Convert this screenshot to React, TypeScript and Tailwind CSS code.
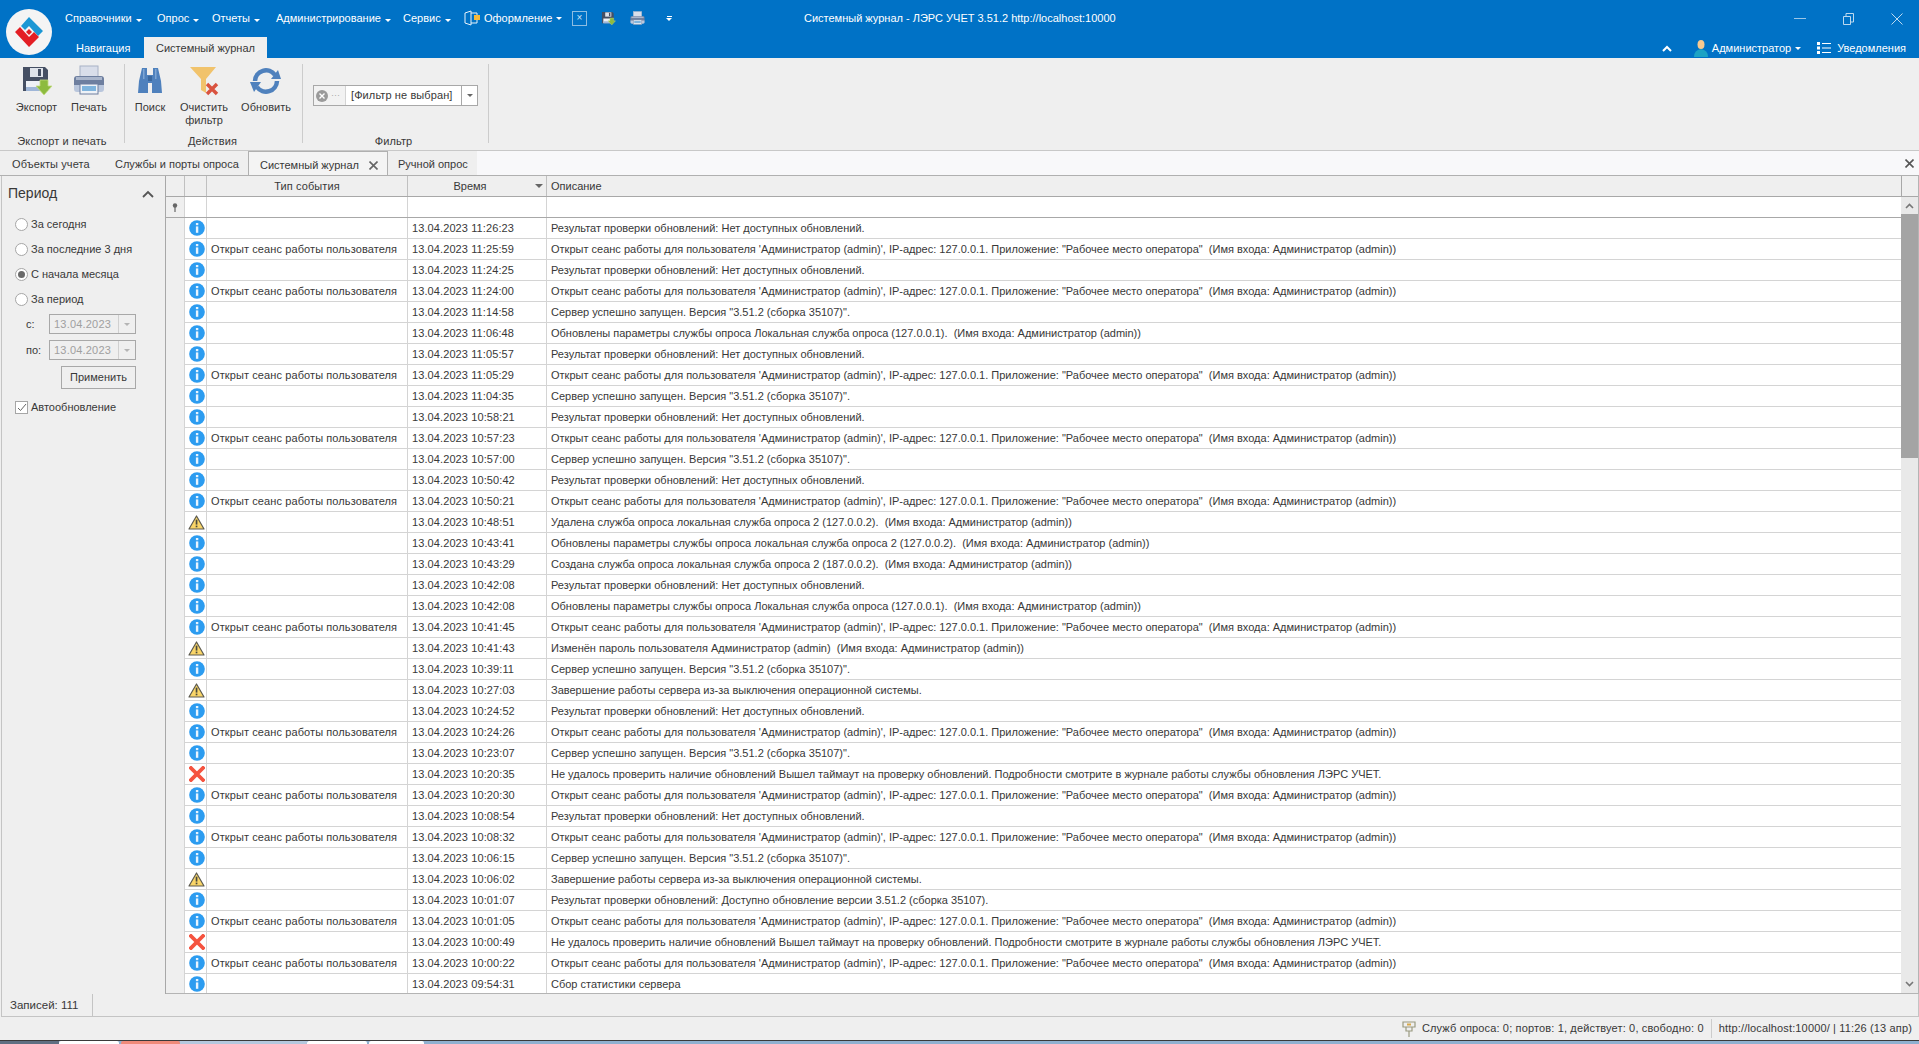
/* Системный журнал - ЛЭРС УЧЕТ */
import React from "react";

type Kind = "info" | "warn" | "error";
type Row = { kind: Kind; type?: boolean; time: string; text: string };

const OPEN = `Открыт сеанс работы для пользователя 'Администратор (admin)', IP-адрес: 127.0.0.1. Приложение: "Рабочее место оператора"  (Имя входа: Администратор (admin))`;
const CHECK = "Результат проверки обновлений: Нет доступных обновлений.";
const STARTED = `Сервер успешно запущен. Версия "3.51.2 (сборка 35107)".`;
const SHUTDOWN = "Завершение работы сервера из-за выключения операционной системы.";
const FAILED = "Не удалось проверить наличие обновлений Вышел таймаут на проверку обновлений. Подробности смотрите в журнале работы службы обновления ЛЭРС УЧЕТ.";
const UPDATED = "Обновлены параметры службы опроса Локальная служба опроса (127.0.0.1).  (Имя входа: Администратор (admin))";

const rows: Row[] = [
  { kind: "info", time: "11:26:23", text: CHECK },
  { kind: "info", type: true, time: "11:25:59", text: OPEN },
  { kind: "info", time: "11:24:25", text: CHECK },
  { kind: "info", type: true, time: "11:24:00", text: OPEN },
  { kind: "info", time: "11:14:58", text: STARTED },
  { kind: "info", time: "11:06:48", text: UPDATED },
  { kind: "info", time: "11:05:57", text: CHECK },
  { kind: "info", type: true, time: "11:05:29", text: OPEN },
  { kind: "info", time: "11:04:35", text: STARTED },
  { kind: "info", time: "10:58:21", text: CHECK },
  { kind: "info", type: true, time: "10:57:23", text: OPEN },
  { kind: "info", time: "10:57:00", text: STARTED },
  { kind: "info", time: "10:50:42", text: CHECK },
  { kind: "info", type: true, time: "10:50:21", text: OPEN },
  { kind: "warn", time: "10:48:51", text: "Удалена служба опроса локальная служба опроса 2 (127.0.0.2).  (Имя входа: Администратор (admin))" },
  { kind: "info", time: "10:43:41", text: "Обновлены параметры службы опроса локальная служба опроса 2 (127.0.0.2).  (Имя входа: Администратор (admin))" },
  { kind: "info", time: "10:43:29", text: "Создана служба опроса локальная служба опроса 2 (187.0.0.2).  (Имя входа: Администратор (admin))" },
  { kind: "info", time: "10:42:08", text: CHECK },
  { kind: "info", time: "10:42:08", text: UPDATED },
  { kind: "info", type: true, time: "10:41:45", text: OPEN },
  { kind: "warn", time: "10:41:43", text: "Изменён пароль пользователя Администратор (admin)  (Имя входа: Администратор (admin))" },
  { kind: "info", time: "10:39:11", text: STARTED },
  { kind: "warn", time: "10:27:03", text: SHUTDOWN },
  { kind: "info", time: "10:24:52", text: CHECK },
  { kind: "info", type: true, time: "10:24:26", text: OPEN },
  { kind: "info", time: "10:23:07", text: STARTED },
  { kind: "error", time: "10:20:35", text: FAILED },
  { kind: "info", type: true, time: "10:20:30", text: OPEN },
  { kind: "info", time: "10:08:54", text: CHECK },
  { kind: "info", type: true, time: "10:08:32", text: OPEN },
  { kind: "info", time: "10:06:15", text: STARTED },
  { kind: "warn", time: "10:06:02", text: SHUTDOWN },
  { kind: "info", time: "10:01:07", text: "Результат проверки обновлений: Доступно обновление версии 3.51.2 (сборка 35107)." },
  { kind: "info", type: true, time: "10:01:05", text: OPEN },
  { kind: "error", time: "10:00:49", text: FAILED },
  { kind: "info", type: true, time: "10:00:22", text: OPEN },
  { kind: "info", time: "09:54:31", text: "Сбор статистики сервера" },
];

function Caret({ className = "border-t-white" }: { className?: string }) {
  return <span className={`ml-[4px] inline-block h-0 w-0 border-x-[3px] border-t-[3px] border-x-transparent ${className}`} />;
}

function StatusIcon({ kind }: { kind: Kind }) {
  if (kind === "warn")
    return (
      <svg width="17" height="15" viewBox="0 0 17 15">
        <path d="M8.5 1 L16 14 H1 Z" fill="#f9d568" stroke="#5c5a50" strokeWidth="1.2" strokeLinejoin="round" />
        <rect x="7.7" y="4.6" width="1.7" height="5" fill="#4a4a3c" />
        <rect x="7.7" y="10.6" width="1.7" height="1.7" fill="#4a4a3c" />
      </svg>
    );
  if (kind === "error")
    return (
      <svg width="16" height="16" viewBox="0 0 16 16">
        <path d="M2 2 L14 14 M14 2 L2 14" stroke="#f5533f" strokeWidth="3.8" strokeLinecap="square" />
      </svg>
    );
  return (
    <svg width="16" height="16" viewBox="0 0 16 16">
      <circle cx="8" cy="8" r="7.8" fill="#2c9cf0" />
      <rect x="6.9" y="3" width="2.4" height="2.2" fill="#e8f4ff" />
      <rect x="6.9" y="6.4" width="2.4" height="6.4" fill="#e8f4ff" />
    </svg>
  );
}

function Logo() {
  return (
    <svg width="46" height="46" viewBox="0 0 46 46">
      <circle cx="23" cy="23" r="23" fill="#f4f4f4" />
      <path d="M15 17 L23 8 L37 22 L32 27 L23 17 L19 21 Z" fill="#1b97d4" />
      <path d="M9 23 L14 18 L23 28 L28 23 L33 28 L23 38 Z" fill="#e31e24" />
      <path d="M23 20 L26 23 L23 26 L20 23 Z" fill="#e31e24" />
    </svg>
  );
}

function FloppyIcon({ size = 32 }: { size?: number }) {
  return (
    <svg width={size} height={size} viewBox="0 0 32 32">
      <path d="M2 2 H24 L27 5 V26 H2 Z" fill="#454f63" />
      <rect x="9" y="3" width="13" height="9" fill="#dfe3ea" />
      <rect x="17" y="4" width="3" height="7" fill="#454f63" />
      <rect x="5" y="16" width="19" height="10" fill="#eef1f6" />
      <rect x="5" y="22" width="19" height="4" fill="#9fb6d8" />
      <path d="M19 15 H27 V21 H31 L23 30 L15 21 H19 Z" fill="#8dbb3f" stroke="#c3dc82" strokeWidth="0.8" />
    </svg>
  );
}

function PrinterIcon({ size = 32 }: { size?: number }) {
  return (
    <svg width={size} height={size} viewBox="0 0 32 32">
      <rect x="7" y="1" width="18" height="12" fill="#d9deea" stroke="#a8b2c6" />
      <rect x="1" y="11" width="30" height="13" rx="3" fill="#6e7f9f" />
      <rect x="3" y="12" width="26" height="3" fill="#aab6cc" />
      <path d="M1 20 H31 V24 Q31 27 28 27 H4 Q1 27 1 24 Z" fill="#b9c6dc" />
      <rect x="7" y="19" width="18" height="10" fill="#eef2f7" stroke="#6e7f9f" />
      <rect x="9" y="21" width="14" height="5" fill="#7fb4dd" />
    </svg>
  );
}

function BinocularsIcon() {
  return (
    <svg width="26" height="27" viewBox="0 0 26 27">
      <path d="M5 1 H10 V8 H16 V1 H21 L24 14 L25 26 H15 V16 H11 V26 H1 L2 14 Z" fill="#4f81bd" />
      <rect x="6" y="2" width="1.5" height="10" fill="#7ea6d4" />
      <rect x="18" y="2" width="1.5" height="10" fill="#7ea6d4" />
      <rect x="11" y="9" width="4" height="5" fill="#3a689f" />
    </svg>
  );
}

function ClearFilterIcon() {
  return (
    <svg width="30" height="30" viewBox="0 0 30 30">
      <path d="M1 1 H27 L17 13 V27 L12 24 V13 Z" fill="#f1c36c" />
      <path d="M18 18 L28 28 M28 18 L18 28" stroke="#d9533f" strokeWidth="3.4" />
    </svg>
  );
}

function RefreshIcon() {
  return (
    <svg width="32" height="28" viewBox="0 0 32 28">
      <path d="M5 14 A11 11 0 0 1 25 8" fill="none" stroke="#4f81bd" strokeWidth="4.5" />
      <path d="M27 14 A11 11 0 0 1 7 20" fill="none" stroke="#4f81bd" strokeWidth="4.5" />
      <path d="M21 12 L31 12 L28 3 Z" fill="#4f81bd" />
      <path d="M0 15 L11 15 L4 25 Z" fill="#4f81bd" />
    </svg>
  );
}

function RibbonButton({ label, width, icon }: { label: React.ReactNode; width: string; icon: React.ReactNode }) {
  return (
    <div className={`flex flex-col items-center pt-[2px] text-center leading-[13px] ${width}`}>
      <div className="flex h-[29px] items-center justify-center">{icon}</div>
      <div className="mt-[6px]">{label}</div>
    </div>
  );
}

function RibbonGroup({ label, width, labelClass = "", children }: { label: string; width: string; labelClass?: string; children: React.ReactNode }) {
  return (
    <>
      <div className={`flex h-[85px] flex-col ${width}`}>
        <div className="flex flex-1">{children}</div>
        <div className={`h-[16px] text-center tracking-[0.1px] ${labelClass}`}>{label}</div>
      </div>
      <div className="h-[79px] w-[1px] bg-[#cccccc]" />
    </>
  );
}

function Radio({ label, checked }: { label: string; checked?: boolean }) {
  return (
    <div className="flex h-[25px] items-center pl-[13px]">
      <span className="flex h-[13px] w-[13px] items-center justify-center rounded-full border border-[#a6a6a6] bg-white">
        {checked && <span className="h-[7px] w-[7px] rounded-full bg-[#6a6a6a]" />}
      </span>
      <span className="ml-[3px]">{label}</span>
    </div>
  );
}

function DateField({ label, className }: { label: string; className: string }) {
  return (
    <div className={`flex items-center pl-[24px] ${className}`}>
      <span className="w-[23px]">{label}</span>
      <div className="flex h-[20px] w-[87px] items-center border border-[#a8a8a8] pl-[4px] tracking-[0.2px] text-[#a0a0a0]">
        <span className="flex-1">13.04.2023</span>
        <span className="flex h-full w-[17px] items-center justify-center border-l border-[#d0d0d0]">
          <Caret className="!ml-0 border-t-[#b4b4b4]" />
        </span>
      </div>
    </div>
  );
}

function LogRow({ row }: { row: Row }) {
  return (
    <div className="flex h-[21px] shrink-0">
      <div className="w-[18px] bg-[#efefef]" />
      <div className="flex w-[22px] items-center justify-center border-b border-l border-[#d4d4d4] bg-white pl-[2px]">
        <StatusIcon kind={row.kind} />
      </div>
      <div className="flex w-[201px] items-center border-b border-l border-[#d4d4d4] bg-white pl-[4px] pt-[1px] tracking-[0.1px]">
        {row.type ? "Открыт сеанс работы пользователя" : ""}
      </div>
      <div className="flex w-[139px] items-center border-b border-l border-[#d4d4d4] bg-white pl-[4px] pt-[1px] tracking-[0.1px]">13.04.2023 {row.time}</div>
      <div className="flex flex-1 items-center whitespace-pre border-b border-l border-[#d4d4d4] bg-white pl-[4px] pt-[1px]">{row.text}</div>
    </div>
  );
}

export default function App() {
  return (
    <div className="flex h-[1044px] w-full flex-col overflow-hidden bg-[#efefef] font-['Liberation_Sans',sans-serif] text-[11px] text-[#383838]">
      {/* Title bar */}
      <header className="flex h-[58px] shrink-0 bg-[#0072c6] text-white">
        <div className="w-[58px] pl-[6px] pt-[9px]">
          <Logo />
        </div>
        <div className="flex flex-1 flex-col">
          <div className="flex h-[37px] items-center">
            <div className="flex w-[746px] items-center pl-[7px] pb-[1px]">
              <span className="w-[92px]">Справочники<Caret /></span>
              <span className="w-[55px]">Опрос<Caret /></span>
              <span className="w-[64px]">Отчеты<Caret /></span>
              <span className="w-[127px]">Администрирование<Caret /></span>
              <span className="w-[61px]">Сервис<Caret /></span>
              <span className="flex w-[108px] items-center">
                <svg width="16" height="16" viewBox="0 0 16 16" className="mr-[4px]">
                  <path d="M1 3 L7 1 V15 L1 13 Z M7 3 H13 V13 H7" fill="none" stroke="#e8f2fa" strokeWidth="1" />
                  <rect x="10" y="5" width="6" height="5" fill="#f5b93a" />
                </svg>
                Оформление<Caret />
              </span>
              <span className="flex h-[15px] w-[15px] items-center justify-center border border-[#8dbde2] text-[10px] leading-none text-[#cfe4f5]">×</span>
              <span className="ml-[14px] flex"><FloppyIcon size={15} /></span>
              <span className="ml-[14px] flex"><PrinterIcon size={15} /></span>
              <span className="ml-[21px] flex flex-col items-center">
                <span className="mb-[1px] h-[1px] w-[5px] bg-white" />
                <span className="h-0 w-0 border-x-[3px] border-t-[3px] border-x-transparent border-t-white" />
              </span>
            </div>
            <div className="flex-1 whitespace-pre pb-[1px]">Системный журнал - ЛЭРС УЧЕТ 3.51.2 http://localhost:10000</div>
            <div className="flex items-center">
              <svg width="12" height="2" viewBox="0 0 12 2"><rect width="12" height="1" fill="#9cc6e6" /></svg>
              <svg width="11" height="12" viewBox="0 0 11 12" className="ml-[37px]">
                <path d="M0.5 3.5 H7.5 V11.5 H0.5 Z M3 3.5 V0.5 H10.5 V9 H7.5" fill="none" stroke="#bcd9ef" />
              </svg>
              <svg width="12" height="12" viewBox="0 0 12 12" className="ml-[37px] mr-[16px]">
                <path d="M0.5 0.5 L11.5 11.5 M11.5 0.5 L0.5 11.5" stroke="#bcd9ef" />
              </svg>
            </div>
          </div>
          <div className="flex h-[21px] items-center">
            <span className="w-[86px] pl-[18px] pt-[2px]">Навигация</span>
            <span className="flex h-full w-[123px] items-center justify-center bg-[#efefef] pt-[2px] text-[#383838]">Системный журнал</span>
            <div className="flex flex-1 items-center justify-end pr-[13px] pt-[1px]">
              <svg width="10" height="7" viewBox="0 0 10 7" className="mr-[22px]">
                <path d="M1 6 L5 2 L9 6" fill="none" stroke="white" strokeWidth="2" />
              </svg>
              <svg width="14" height="17" viewBox="0 0 14 17" className="mr-[4px]">
                <ellipse cx="7" cy="4.5" rx="3.5" ry="4.5" fill="#f8c990" />
                <path d="M0 17 Q0 10 7 9 Q14 10 14 17 Z" fill="#1da3c4" />
              </svg>
              <span>Администратор</span>
              <Caret />
              <svg width="14" height="12" viewBox="0 0 14 12" className="ml-[16px] mr-[6px]">
                <rect x="0" y="0" width="3" height="3" fill="white" /><rect x="0" y="4.5" width="3" height="3" fill="white" /><rect x="0" y="9" width="3" height="3" fill="white" />
                <rect x="5" y="1" width="9" height="1" fill="white" /><rect x="5" y="5.5" width="9" height="1" fill="white" /><rect x="5" y="10" width="9" height="1" fill="white" />
              </svg>
              <span>Уведомления</span>
            </div>
          </div>
        </div>
      </header>

      {/* Ribbon */}
      <section className="flex h-[92px] shrink-0 pt-[6px]">
        <RibbonGroup label="Экспорт и печать" width="w-[124px]">
          <div className="w-[8px]" />
          <RibbonButton label="Экспорт" width="w-[57px]" icon={<FloppyIcon />} />
          <RibbonButton label="Печать" width="w-[48px]" icon={<PrinterIcon />} />
        </RibbonGroup>
        <RibbonGroup label="Действия" width="w-[177px]" labelClass="pr-[2px]">
          <RibbonButton label="Поиск" width="w-[50px]" icon={<BinocularsIcon />} />
          <RibbonButton label={<>Очистить<br />фильтр</>} width="w-[58px]" icon={<ClearFilterIcon />} />
          <RibbonButton label="Обновить" width="w-[66px]" icon={<RefreshIcon />} />
        </RibbonGroup>
        <RibbonGroup label="Фильтр" width="w-[185px]" labelClass="pr-[4px]">
          <div className="pl-[10px] pt-[21px]">
            <div className="flex h-[21px] w-[165px] items-center border border-[#a8a8a8] bg-white">
              <span className="flex h-full w-[32px] items-center border-r border-[#d4d4d4] bg-[#f2f2f2] pl-[2px]">
                <svg width="12" height="12" viewBox="0 0 12 12">
                  <circle cx="6" cy="6" r="6" fill="#9a9a9a" />
                  <path d="M3.5 3.5 L8.5 8.5 M8.5 3.5 L3.5 8.5" stroke="white" strokeWidth="1.4" />
                </svg>
                <span className="ml-[3px] text-[9px] leading-none text-[#a8a8a8]">···</span>
              </span>
              <span className="flex-1 pl-[5px] tracking-[0.1px]">[Фильтр не выбран]</span>
              <span className="flex h-full w-[16px] items-center justify-center border-l border-[#a8a8a8]">
                <Caret className="!ml-0 border-t-[#666666]" />
              </span>
            </div>
          </div>
        </RibbonGroup>
      </section>

      {/* Document tabs */}
      <nav className="flex h-[26px] shrink-0 border-y border-t-[#c8c8c8] border-b-[#b0b0b0] bg-[#f8f8fa]">
        <div className="flex h-full w-[477px] bg-[#efefef] pt-[3px]">
          <span className="flex w-[103px] items-center pl-[12px] tracking-[0.1px]">Объекты учета</span>
          <span className="flex w-[145px] items-center pl-[12px]">Службы и порты опроса</span>
          <span className="-mt-[3px] flex w-[140px] items-center border-x border-t border-[#b0b0b0] bg-[#f4f4f4] pl-[11px] pt-[3px]">
            <span className="flex-1">Системный журнал</span>
            <svg width="9" height="9" viewBox="0 0 9 9" className="mr-[9px]">
              <path d="M0.5 0.5 L8.5 8.5 M8.5 0.5 L0.5 8.5" stroke="#666666" strokeWidth="1.6" />
            </svg>
          </span>
          <span className="flex flex-1 items-center pl-[10px]">Ручной опрос</span>
        </div>
        <div className="flex flex-1 items-center justify-end pr-[5px]">
          <svg width="9" height="9" viewBox="0 0 9 9">
            <path d="M0.5 0.5 L8.5 8.5 M8.5 0.5 L0.5 8.5" stroke="#555555" strokeWidth="1.6" />
          </svg>
        </div>
      </nav>

      {/* Content */}
      <main className="flex min-h-0 flex-1">
        <aside className="ml-[1px] w-[165px] shrink-0 border-x border-r-[#a8a8a8] border-l-[#c4c4c4]">
          <div className="flex h-[36px] items-center justify-between pl-[6px] pr-[11px] pb-[1px]">
            <span className="text-[14px]">Период</span>
            <svg width="12" height="8" viewBox="0 0 12 8">
              <path d="M1 7 L6 2 L11 7" fill="none" stroke="#555555" strokeWidth="1.8" />
            </svg>
          </div>
          <Radio label="За сегодня" />
          <Radio label="За последние 3 дня" />
          <Radio label="С начала месяца" checked />
          <Radio label="За период" />
          <DateField label="с:" className="mt-[2px]" />
          <DateField label="по:" className="mt-[6px]" />
          <div className="mt-[6px] flex justify-end pr-[29px]">
            <button className="h-[23px] w-[75px] border border-[#a8a8a8] text-center">Применить</button>
          </div>
          <div className="mt-[11px] flex h-[14px] items-center pl-[13px]">
            <span className="flex h-[13px] w-[13px] items-center justify-center border border-[#a6a6a6] bg-white">
              <svg width="10" height="9" viewBox="0 0 10 9">
                <path d="M1 5 L3.5 7.5 L9 1" fill="none" stroke="#666666" />
              </svg>
            </span>
            <span className="ml-[3px]">Автообновление</span>
          </div>
        </aside>

        <div className="flex min-w-0 flex-1 border-b border-[#b4b4b4]">
          <div className="flex min-w-0 flex-1 flex-col overflow-hidden">
            <div className="flex h-[21px] shrink-0 border-b border-[#a8a8a8] bg-[#efefef]">
              <div className="w-[18px]" />
              <div className="w-[22px] border-l border-[#c0c0c0]" />
              <div className="flex w-[201px] items-center justify-center border-l border-[#c0c0c0] pt-[1px] tracking-[0.1px]">Тип события</div>
              <div className="relative flex w-[139px] items-center justify-center border-l border-[#c0c0c0] pr-[14px] pt-[1px]">
                Время
                <span className="absolute right-[3px] top-[8px] h-0 w-0 border-x-[4px] border-t-[4px] border-x-transparent border-t-[#666666]" />
              </div>
              <div className="flex flex-1 items-center border-l border-[#c0c0c0] pl-[4px] pt-[1px]">Описание</div>
            </div>
            <div className="flex h-[21px] shrink-0 border-b border-[#a8a8a8] bg-white">
              <div className="flex w-[18px] items-center justify-center bg-[#efefef]">
                <svg width="6" height="9" viewBox="0 0 6 9">
                  <circle cx="3" cy="2.5" r="2.2" fill="#666666" />
                  <rect x="2.4" y="4" width="1.2" height="5" fill="#666666" />
                </svg>
              </div>
              <div className="w-[22px] border-l border-[#d4d4d4]" />
              <div className="w-[201px] border-l border-[#d4d4d4]" />
              <div className="w-[139px] border-l border-[#d4d4d4]" />
              <div className="flex-1 border-l border-[#d4d4d4]" />
            </div>
            {rows.map((row, i) => (
              <LogRow key={i} row={row} />
            ))}
          </div>

          {/* Scrollbar */}
          <div className="flex w-[18px] shrink-0 flex-col border-r border-[#b4b4b4] bg-[#e9e9e9]">
            <div className="h-[21px] shrink-0 border-b border-l border-[#a8a8a8] bg-[#efefef]" />
            <div className="flex h-[17px] shrink-0 items-center justify-center">
              <svg width="9" height="6" viewBox="0 0 9 6"><path d="M1 5 L4.5 1.5 L8 5" fill="none" stroke="#777777" strokeWidth="1.6" /></svg>
            </div>
            <div className="h-[244px] shrink-0 bg-[#a4a4a4]" />
            <div className="flex flex-1 items-end justify-center pb-[6px]">
              <svg width="9" height="6" viewBox="0 0 9 6"><path d="M1 1 L4.5 4.5 L8 1" fill="none" stroke="#777777" strokeWidth="1.6" /></svg>
            </div>
          </div>
        </div>
      </main>

      {/* Records count */}
      <div className="ml-[1px] flex h-[23px] shrink-0 border-x border-b border-[#c4c4c4]">
        <div className="flex w-[91px] items-center border-r border-[#c4c4c4] pl-[8px] pt-[1px] text-[11.5px]">Записей: 111</div>
      </div>

      {/* Status bar */}
      <footer className="flex h-[23px] shrink-0 items-center justify-end pr-[7px] tracking-[0.15px]">
        <svg width="14" height="16" viewBox="0 0 14 16" className="mr-[6px]">
          <path d="M1 1 H13 V6 H1 Z M4 6 V10 H10 V6 M7 10 V16" fill="none" stroke="#9a9a80" strokeWidth="1.2" />
          <rect x="5" y="2.5" width="4" height="2" fill="#d8a848" />
        </svg>
        <span>Служб опроса: 0; портов: 1, действует: 0, свободно: 0</span>
        <span className="mx-[7px] h-[19px] w-[1px] bg-[#cccccc]" />
        <span>http://localhost:10000/ | 11:26 (13 апр)</span>
      </footer>

      {/* Taskbar edge */}
      <div className="flex h-[4px] shrink-0 border-t border-[#3a3a3a] bg-[#8fb0d0]">
        <div className="w-[59px] bg-[#5f6f82]" />
        <div className="w-[60px] rounded-t-[2px] bg-white" />
        <div className="ml-[2px] w-[59px] rounded-t-[2px] bg-[#f08a7a]" />
        <div className="w-[127px] bg-[#b4c8de]" />
        <div className="w-[60px] rounded-t-[2px] bg-white" />
        <div className="ml-[2px] w-[55px] rounded-t-[2px] bg-white" />
      </div>
    </div>
  );
}
